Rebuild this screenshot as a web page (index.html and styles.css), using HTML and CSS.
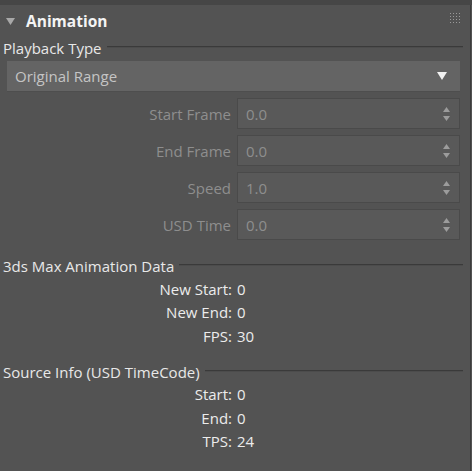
FILE: index.html
```html
<!DOCTYPE html>
<html>
<head>
<meta charset="utf-8">
<link rel="stylesheet" href="styles.css">
</head>
<body>
<div class="frame">
  <div class="topband"></div>
  <div class="panel">
    <div class="rollout-head">
      <svg class="twisty" width="9" height="7" viewBox="0 0 9 7"><polygon points="0,0 9,0 4.5,7" fill="#a8a8a8"/></svg>
      <span class="rollout-title">Animation</span>
      <svg class="grip" width="10" height="10" viewBox="0 0 10 10">
        <g fill="#9a9a9a">
          <rect x="0" y="0" width="1" height="1"/><rect x="3" y="0" width="1" height="1"/><rect x="6" y="0" width="1" height="1"/><rect x="9" y="0" width="1" height="1"/>
          <rect x="0" y="3" width="1" height="1"/><rect x="3" y="3" width="1" height="1"/><rect x="6" y="3" width="1" height="1"/><rect x="9" y="3" width="1" height="1"/>
          <rect x="0" y="6" width="1" height="1"/><rect x="3" y="6" width="1" height="1"/><rect x="6" y="6" width="1" height="1"/><rect x="9" y="6" width="1" height="1"/>
          <rect x="0" y="9" width="1" height="1"/><rect x="3" y="9" width="1" height="1"/><rect x="6" y="9" width="1" height="1"/><rect x="9" y="9" width="1" height="1"/>
        </g>
      </svg>
    </div>

    <div class="group-head g1"><span>Playback Type</span><div class="rule"></div></div>
    <div class="dropdown">
      <span>Original Range</span>
      <svg width="10" height="8" viewBox="0 0 10 8"><polygon points="0,0 10,0 5,8" fill="#f2f2f2"/></svg>
    </div>

    <div class="spin-list">
      <div class="spin-row"><span class="spin-label">Start Frame</span><div class="spin-field"><span>0.0</span><svg width="7" height="14" viewBox="0 0 7 14"><polygon points="3.5,0 7,5 0,5" fill="#9c9c9c"/><polygon points="0,9 7,9 3.5,14" fill="#9c9c9c"/></svg></div></div>
      <div class="spin-row"><span class="spin-label">End Frame</span><div class="spin-field"><span>0.0</span><svg width="7" height="14" viewBox="0 0 7 14"><polygon points="3.5,0 7,5 0,5" fill="#9c9c9c"/><polygon points="0,9 7,9 3.5,14" fill="#9c9c9c"/></svg></div></div>
      <div class="spin-row"><span class="spin-label">Speed</span><div class="spin-field"><span>1.0</span><svg width="7" height="14" viewBox="0 0 7 14"><polygon points="3.5,0 7,5 0,5" fill="#9c9c9c"/><polygon points="0,9 7,9 3.5,14" fill="#9c9c9c"/></svg></div></div>
      <div class="spin-row"><span class="spin-label">USD Time</span><div class="spin-field"><span>0.0</span><svg width="7" height="14" viewBox="0 0 7 14"><polygon points="3.5,0 7,5 0,5" fill="#9c9c9c"/><polygon points="0,9 7,9 3.5,14" fill="#9c9c9c"/></svg></div></div>
    </div>

    <div class="group-head g2"><span>3ds Max Animation Data</span><div class="rule"></div></div>
    <div class="info">
      <span class="k">New Start:</span><span class="v">0</span>
      <span class="k">New End:</span><span class="v">0</span>
      <span class="k">FPS:</span><span class="v">30</span>
    </div>

    <div class="group-head g3"><span>Source Info (USD TimeCode)</span><div class="rule"></div></div>
    <div class="info">
      <span class="k">Start:</span><span class="v">0</span>
      <span class="k">End:</span><span class="v">0</span>
      <span class="k">TPS:</span><span class="v">24</span>
    </div>
  </div>
  <div class="edge"></div>
</div>
</body>
</html>
```

FILE: styles.css
```css
html, body {
  margin: 0;
  padding: 0;
  background: #535353;
}
body {
  font-family: "Open Sans", "Noto Sans", sans-serif;
  font-size: 15px;
  color: #e6e6e6;
  width: 472px;
  height: 471px;
  overflow: hidden;
}
.frame {
  position: relative;
  display: flex;
  flex-direction: column;
  height: 471px;
}
.topband {
  height: 5px;
  background: #464646;
}
.panel {
  width: 463px;
  flex: 1;
}
.edge {
  position: absolute;
  top: 5px;
  right: 1px;
  bottom: 0;
  width: 1px;
  background: #3c3c3c;
}
.rollout-head {
  height: 31px;
  display: flex;
  align-items: center;
  padding-left: 6px;
}
.twisty { margin-right: 11px; margin-top: 1px; }
.rollout-title {
  font-weight: 700;
  font-size: 15.5px;
  color: #f4f4f4;
  flex: 1;
}
.grip { margin-right: 3px; margin-top: -6px; }

.group-head {
  display: flex;
  align-items: center;
  padding-left: 3px;
  height: 20px;
  color: #e8e8e8;
}
.group-head .rule {
  flex: 1;
  height: 2px;
  margin-left: 5px;
  margin-top: -2px;
  background: #3a3a3a;
  border-bottom: 1px solid #4c4c4c;
  box-sizing: border-box;
}
.g1 { margin-top: 2px; }
.g2 { margin-top: 16px; }
.g3 { margin-top: 14px; }

.dropdown {
  margin: 3px 3px 0 7px;
  height: 31px;
  box-sizing: border-box;
  background: #646464;
  border-bottom: 1px solid #4e4e4e;
  display: flex;
  align-items: center;
  justify-content: space-between;
  padding: 0 13px 0 8px;
  color: #c4c4c4;
}

.spin-list {
  margin-top: 6px;
  display: flex;
  flex-direction: column;
  gap: 6px;
}
.spin-row {
  display: flex;
  align-items: center;
  height: 31px;
}
.spin-label {
  width: 231px;
  text-align: right;
  color: #8e8e8e;
}
.spin-field {
  margin-left: 6px;
  width: 223px;
  height: 31px;
  box-sizing: border-box;
  background: #595959;
  border: 1px solid #4a4a4a;
  display: flex;
  align-items: center;
  justify-content: space-between;
  padding: 0 9px 0 8px;
  color: #8e8e8e;
}

.info {
  display: grid;
  grid-template-columns: 232px auto;
  column-gap: 5px;
  grid-auto-rows: 23.5px;
  align-items: center;
  color: #ececec;
  margin-top: 1px;
}
.info .k { text-align: right; }
```
